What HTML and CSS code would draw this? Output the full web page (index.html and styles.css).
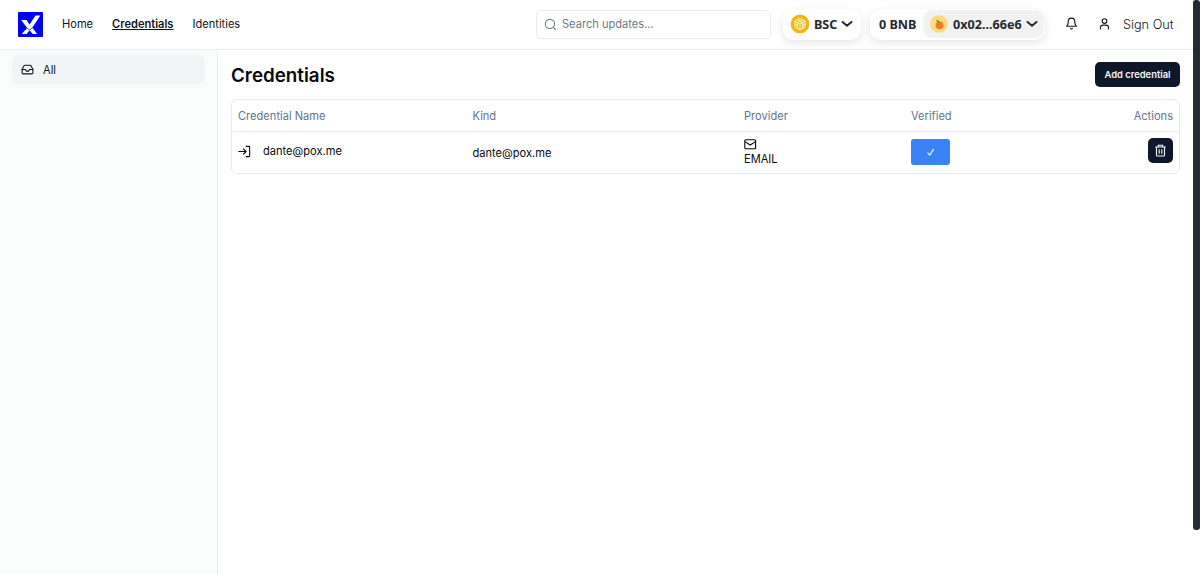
FILE: index.html
```html
<!DOCTYPE html>
<html lang="en">
<head>
<meta charset="utf-8">
<title>Credentials</title>
<link rel="stylesheet" href="styles.css">
</head>
<body>
<div class="app">
  <header class="topbar">
    <svg class="logo" viewBox="0 0 25 25"><rect width="25" height="25" rx="1" fill="#0000f5"/><path d="M3.2 8H8.5L11.5 12.5L17.5 3.5H22.3L14.6 15.2L19 22H14.7L11.6 18.3L8.6 22H3.8L9 15.7Z" fill="#fff"/><path d="M6.5 18.2L9.2 16.2L11.7 18.2L15.5 14.3M14.6 16.6L17.2 18.2" fill="none" stroke="#0000f5" stroke-width=".7"/></svg>
    <nav class="nav"><a>Home</a><a class="current">Credentials</a><a>Identities</a></nav>
    <div class="search">
      <svg class="line" viewBox="0 0 24 24"><circle cx="11" cy="11" r="8.5"/><path d="m21 21-4-4"/></svg>
      <span>Search updates...</span>
    </div>
    <button class="wallet chain">
      <svg class="coin" viewBox="0 0 20 20"><circle cx="10" cy="10" r="9.4" fill="#efb914"/><path d="M10 4.2L15 7V13L10 15.9L5 13V7Z M5.2 7.2L10 10L14.8 7.2 M10 10V15.7 M7.5 5.7L12.4 8.6V13.7 M12.5 5.7L7.6 8.6V13.7 M5 10L7.5 11.5 M15 10L12.5 11.5" fill="none" stroke="#fff6d4" stroke-width="1"/></svg>
      <span>BSC</span>
      <svg class="chev" viewBox="0 0 12 8"><path d="M1.5 2L6 5.7L10.5 2"/></svg>
    </button>
    <div class="wallet account">
      <span class="balance">0 BNB</span>
      <button class="address">
        <svg class="avatar" viewBox="0 0 18 18"><circle cx="9" cy="9" r="9" fill="#fcdc7c"/><circle cx="9.5" cy="10.3" r="3.9" fill="#fb7625"/><path d="M9.6 7.4C7.8 7.5 6.4 6.6 6 5C7.9 4.7 9.4 5.7 9.6 7.4Z" fill="#43a047"/></svg>
        <span>0x02...66e6</span>
        <svg class="chev" viewBox="0 0 12 8"><path d="M1.5 2L6 5.7L10.5 2"/></svg>
      </button>
    </div>
    <svg class="line bell" viewBox="0 0 24 24"><path d="M6 8a6 6 0 0 1 12 0c0 7 3 9 3 9H3s3-2 3-9"/><path d="M10.3 21a1.94 1.94 0 0 0 3.4 0"/></svg>
    <svg class="line user" viewBox="0 0 24 24"><circle cx="12" cy="7.5" r="4.3"/><path d="M4.5 22v-2a5 5 0 0 1 5-5h5a5 5 0 0 1 5 5v2"/></svg>
    <a class="signout">Sign Out</a>
  </header>
  <div class="body">
    <aside class="sidebar">
      <a class="side-item">
        <svg class="line" viewBox="0 0 24 24"><path d="M22 12h-6l-2 3h-4l-2-3H2"/><path d="M5.45 5.11 2 12v6a2 2 0 0 0 2 2h16a2 2 0 0 0 2-2v-6l-3.45-6.89A2 2 0 0 0 16.76 4H7.24a2 2 0 0 0-1.79 1.11z"/></svg>
        <span>All</span>
      </a>
    </aside>
    <main class="main">
      <div class="heading"><h1>Credentials</h1><button class="add">Add credential</button></div>
      <div class="table">
        <div class="row head"><span>Credential Name</span><span>Kind</span><span>Provider</span><span>Verified</span><span class="end">Actions</span></div>
        <div class="row item">
          <div class="name"><svg class="line enter" viewBox="0 0 24 24"><path d="M15 2.5h5a1.5 1.5 0 0 1 1.5 1.5v16a1.5 1.5 0 0 1-1.5 1.5h-5M1.5 12h13.5M10 7l5 5-5 5"/></svg><span>dante@pox.me</span></div>
          <span>dante@pox.me</span>
          <div class="provider"><svg viewBox="0 0 13 13"><rect x=".8" y="1.8" width="10.8" height="9" rx="1"/><path d="M1 3.6L6.2 7L11.4 3.6"/></svg><span>EMAIL</span></div>
          <div><span class="verified"><svg viewBox="0 0 12 12"><path d="M2.5 6.5L4.7 9L8.7 3"/></svg></span></div>
          <div class="end"><button class="trash"><svg viewBox="0 0 13 13"><path d="M1.2 3H11.8M4.3 2.8V1.3H8.7V2.8M2.5 3V11Q2.5 12 3.5 12H9.5Q10.5 12 10.5 11V3M5.2 5.3V9.8M7.8 5.3V9.8"/></svg></button></div>
        </div>
      </div>
    </main>
  </div>
</div>
<div class="scrollbar"></div>
</body>
</html>
```

FILE: styles.css
```css
* { box-sizing: border-box; }
body { margin: 0; display: flex; height: 574px; overflow: hidden; background: #fff; color: #11151d; font: 11.1px/16px Inter, "Liberation Sans", sans-serif; }
button { border: 0; margin: 0; padding: 0; font: inherit; color: inherit; }
svg { display: block; flex: none; }
.app { flex: 1; display: flex; flex-direction: column; }
.scrollbar { width: 7px; height: 530px; background: #252b35; border-radius: 3px; }
.line { width: 13px; height: 13px; fill: none; stroke: currentColor; stroke-width: 2; stroke-linecap: round; stroke-linejoin: round; }
.topbar { height: 50px; border-bottom: 1px solid #e8ecf3; display: flex; align-items: center; padding: 0 19px 1px 18px; }
.logo { width: 25px; height: 25px; margin-right: 19px; }
.nav { display: flex; gap: 19px; margin-right: auto; }
.current { font-weight: 600; text-decoration: underline; }
.search { width: 235px; height: 29px; border: 1px solid #e8ebf1; border-radius: 5px; display: flex; align-items: center; gap: 5px; padding-left: 7px; color: #727983; margin-right: 12px; font-size: 11.1px; }
.wallet { height: 31px; border-radius: 10px; background: #fff; box-shadow: 0 3px 9px rgba(0,0,0,.1); display: flex; align-items: center; font: 700 12.6px/18px "Noto Sans", sans-serif; color: #25292e; }
.wallet span { padding-top: 2px; }
.chain { width: 78px; padding-left: 7px; margin-right: 9px; }
.coin { width: 20px; height: 20px; margin-right: 4px; }
.chev { width: 12px; height: 8px; fill: none; stroke: currentColor; stroke-width: 2; stroke-linecap: round; stroke-linejoin: round; margin-left: 4px; }
.account { width: 175px; justify-content: space-between; padding: 0 1px 0 9px; margin-right: 20px; }
.address { width: 121px; height: 28px; border-radius: 9px; background: #f1f1f2; display: flex; align-items: center; padding-left: 7px; }
.avatar { width: 18px; height: 18px; margin-right: 5px; }
.bell { margin: 0 20px 1px 0; }
.user { margin: 0 12px 1px 0; }
.signout { font-size: 12.7px; font-weight: 300; width: 51px; padding-top: 2px; white-space: nowrap; }
.body { flex: 1; display: flex; }
.sidebar { width: 218px; background: #fafcfc; border-right: 1px solid #e8ecf3; padding: 5px 12px; }
.side-item { height: 29px; background: #f3f4f6; border-radius: 6px; display: flex; align-items: center; gap: 9px; padding-left: 9px; }
.main { flex: 1; padding: 12px 13px; }
.heading { display: flex; justify-content: space-between; height: 37px; }
h1 { margin: 0; padding-top: 1px; font-size: 18.8px; line-height: 26px; font-weight: 600; color: #09090b; }
.add { width: 85px; height: 25px; background: #0f172a; color: #f8fafc; border-radius: 5px; font-size: 9.4px; font-weight: 600; }
.table { border: 1px solid #e6eaf1; border-radius: 6px; color: #09090b; }
.row { display: grid; grid-template-columns: 234.5px 271.5px 167px 1fr auto; padding: 0 6px; align-items: center; }
.head { height: 32px; border-bottom: 1px solid #e8ebf2; color: #64748b; }
.item { height: 41px; }
.name { display: flex; align-items: center; gap: 12px; padding-bottom: 3px; }
.provider { line-height: 14px; padding-bottom: 1px; }
.provider svg { width: 13px; height: 13px; fill: none; stroke: currentColor; stroke-width: 1.1; }
.provider span { display: block; padding-top: 1px; }
.verified { width: 39px; height: 26px; margin-bottom: 1px; background: #3b82f6; border-radius: 3px; display: flex; align-items: center; justify-content: center; color: #fff; }
.verified svg { width: 12px; height: 12px; fill: none; stroke: currentColor; stroke-width: 1.1; }
.trash { width: 25px; height: 25px; margin-bottom: 4px; margin-left: auto; background: #0f172a; border-radius: 5px; color: #f8fafc; display: flex; align-items: center; justify-content: center; }
.trash svg { width: 13px; height: 13px; fill: none; stroke: currentColor; stroke-width: 1.1; }
```
